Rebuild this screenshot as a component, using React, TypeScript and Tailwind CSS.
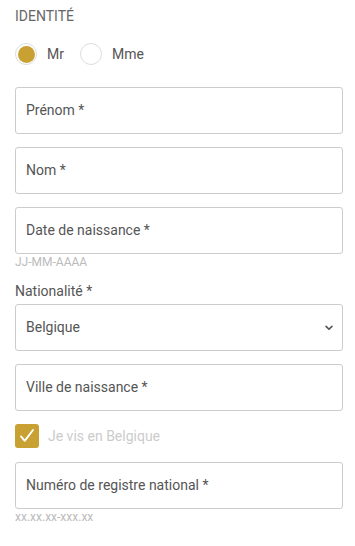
import { useState } from "react";

const font = { fontFamily: "Roboto, 'Liberation Sans', sans-serif" };

function Field({ label }: { label: string }) {
  return (
    <div className="flex h-[47px] items-center rounded-[3px] border border-[#cccccc] bg-white px-[10px] text-[14px] text-[#555555]">
      {label}
    </div>
  );
}

function Radio({ label, checked, onClick }: { label: string; checked: boolean; onClick: () => void }) {
  return (
    <button type="button" onClick={onClick} className="flex items-center gap-[10px]">
      <span className="flex h-[22px] w-[22px] items-center justify-center rounded-full border border-[#dddddd] bg-white">
        {checked && <span className="h-[17px] w-[17px] rounded-full bg-[#c9a032]" />}
      </span>
      <span className="text-[14px] text-[#555555]">{label}</span>
    </button>
  );
}

export default function App() {
  const [civility, setCivility] = useState<"mr" | "mme">("mr");
  const [livesInBelgium, setLivesInBelgium] = useState(true);

  return (
    <div className="min-h-[546px] w-[355px] bg-white pl-[15px] pr-[12px] pt-[7px]" style={font}>
      <h2 className="text-[14px] leading-[18px] text-[#666666]">IDENTITÉ</h2>

      {/* Civility */}
      <div className="mt-[18px] flex items-center gap-[16px]">
        <Radio label="Mr" checked={civility === "mr"} onClick={() => setCivility("mr")} />
        <Radio label="Mme" checked={civility === "mme"} onClick={() => setCivility("mme")} />
      </div>

      <div className="mt-[22px] flex flex-col gap-[13px]">
        <Field label="Prénom *" />
        <Field label="Nom *" />
        <div>
          <Field label="Date de naissance *" />
          <p className="mt-[1px] text-[12px] leading-[14px] text-[#bbbbbb]">JJ-MM-AAAA</p>
        </div>
      </div>

      {/* Nationality */}
      <label className="mt-[13px] block text-[14px] leading-[18px] text-[#555555]">Nationalité *</label>
      <div className="mt-[4px] flex h-[47px] items-center justify-between rounded-[3px] border border-[#cccccc] bg-white pl-[10px] pr-[8px] text-[14px] text-[#555555]">
        <span>Belgique</span>
        <svg width="10" height="10" viewBox="0 0 24 24" fill="none" stroke="#555555" strokeWidth="4" strokeLinecap="round" strokeLinejoin="round">
          <path d="M5 8l7 7 7-7" />
        </svg>
      </div>

      <div className="mt-[13px]">
        <Field label="Ville de naissance *" />
      </div>

      {/* Residence */}
      <button
        type="button"
        onClick={() => setLivesInBelgium(!livesInBelgium)}
        className="mt-[13px] flex items-center gap-[9px]"
      >
        <span className="flex h-[24px] w-[24px] items-center justify-center rounded-[3px] bg-[#c9a032]">
          {livesInBelgium && (
            <svg width="18" height="18" viewBox="0 0 24 24" fill="none" stroke="white" strokeWidth="2.5" strokeLinecap="round" strokeLinejoin="round">
              <path d="M4 12.5l5 6L20 4" />
            </svg>
          )}
        </span>
        <span className="text-[14px] text-[#cccccc]">Je vis en Belgique</span>
      </button>

      <div className="mt-[14px]">
        <Field label="Numéro de registre national *" />
        <p className="mt-[1px] text-[12px] leading-[14px] text-[#bbbbbb]">xx.xx.xx-xxx.xx</p>
      </div>
    </div>
  );
}
